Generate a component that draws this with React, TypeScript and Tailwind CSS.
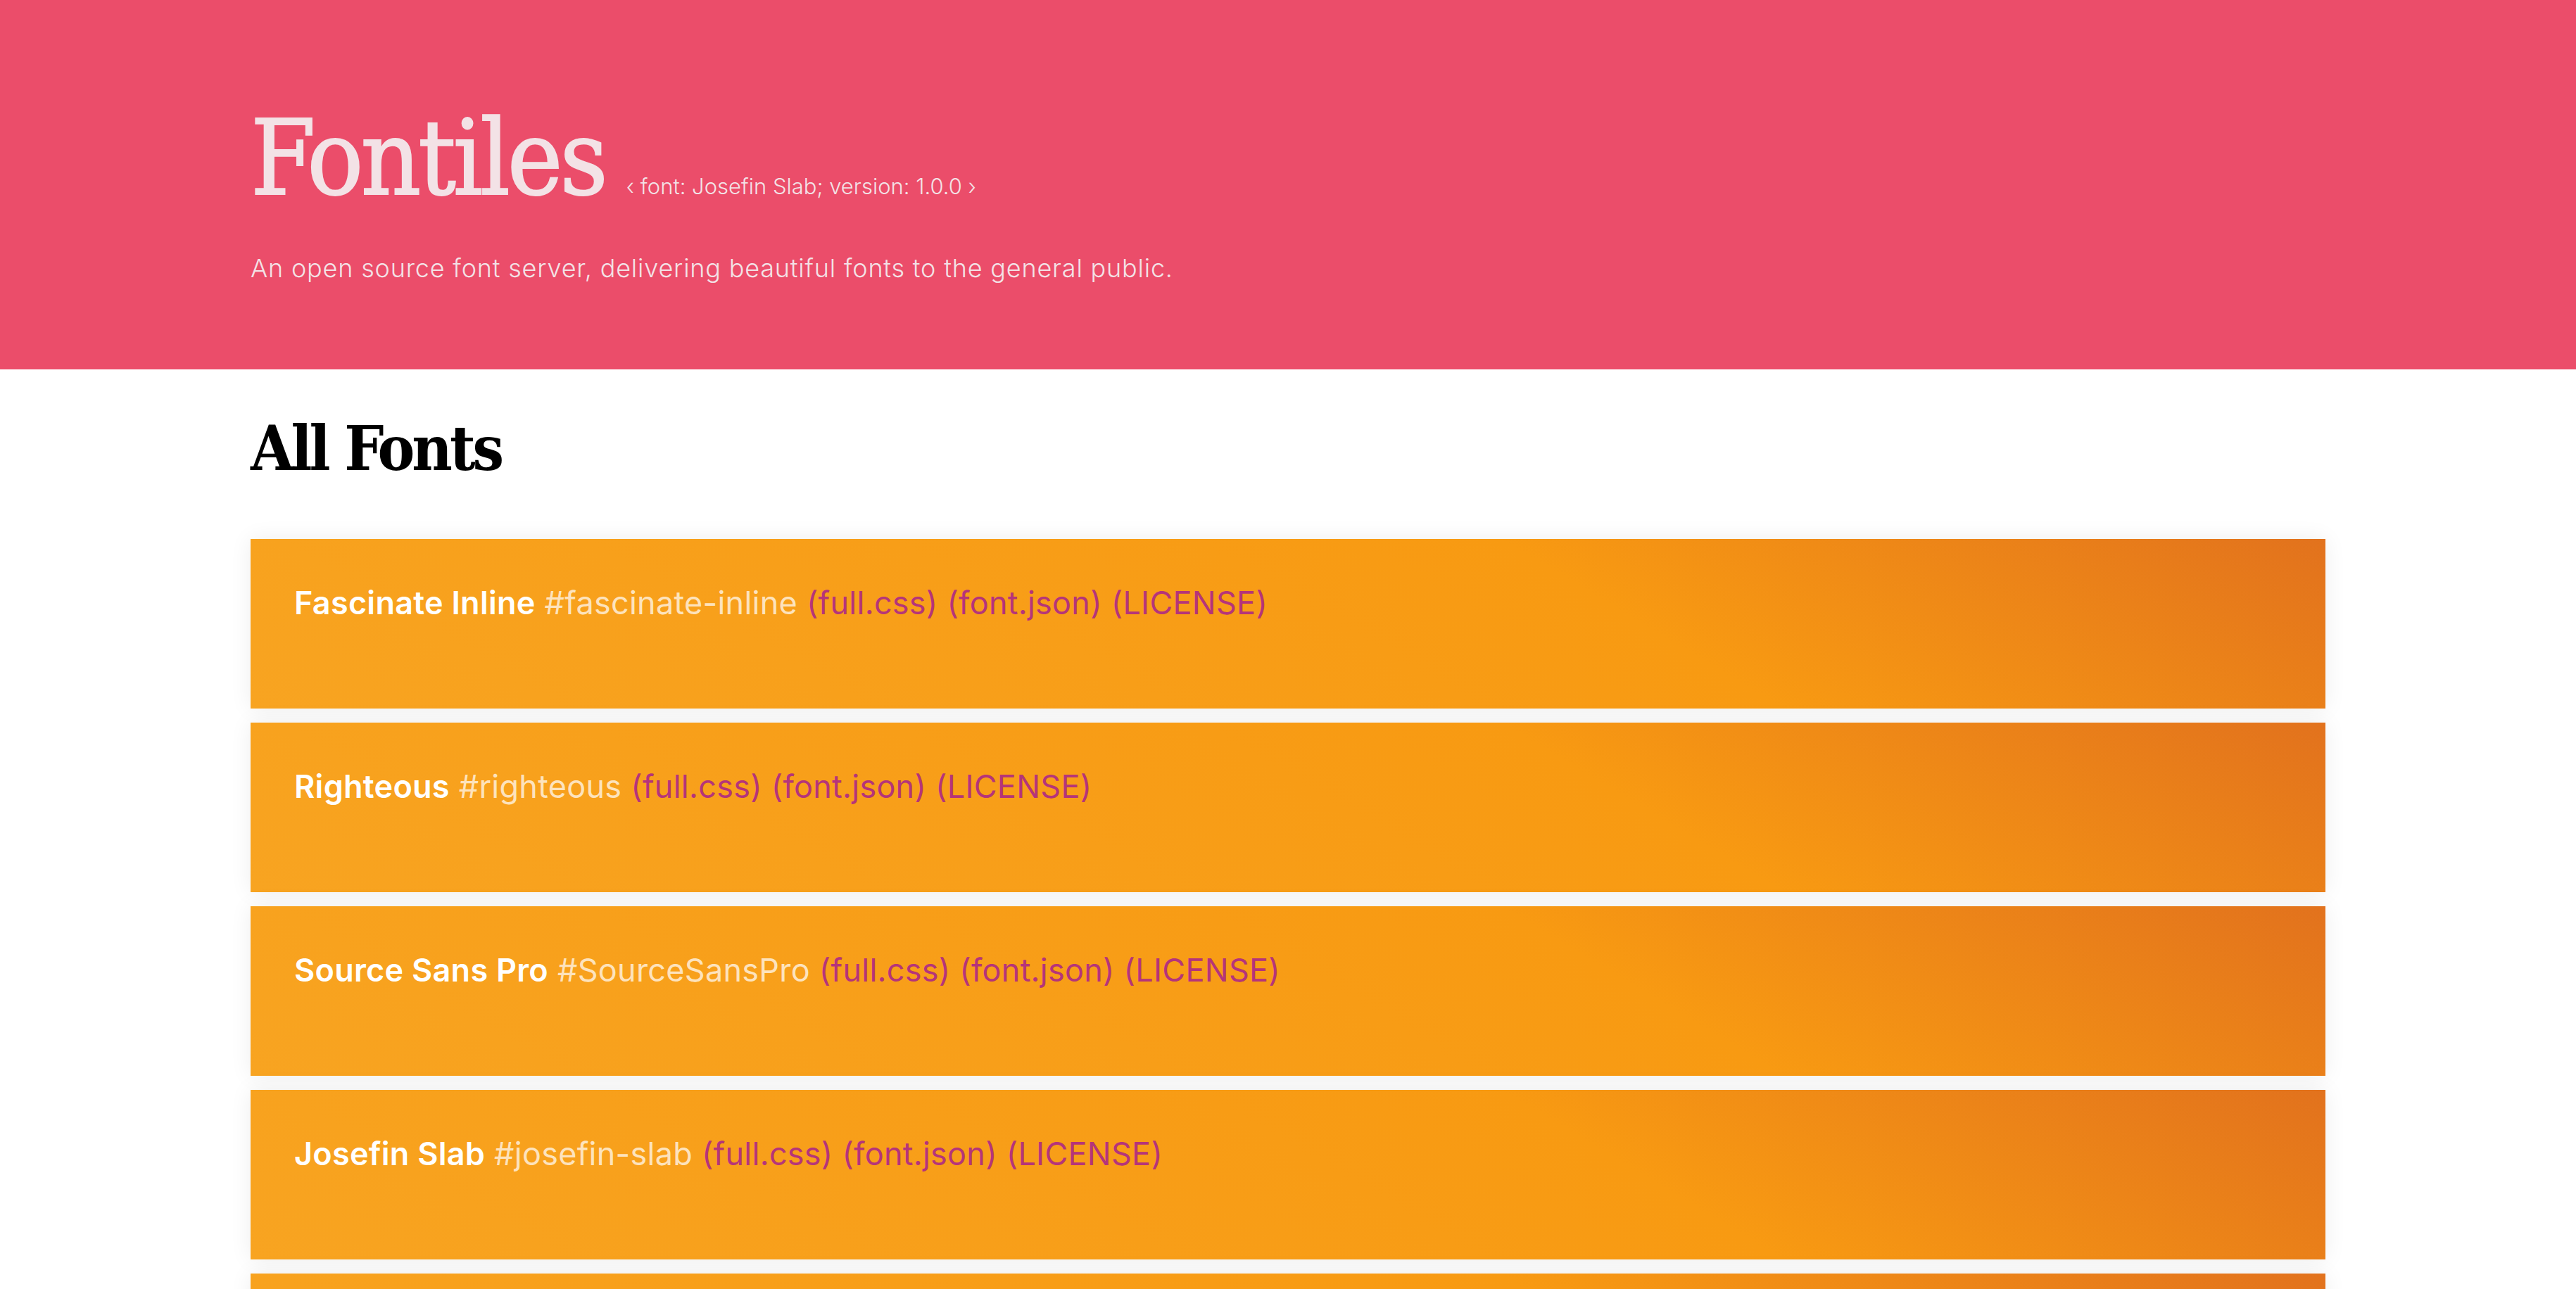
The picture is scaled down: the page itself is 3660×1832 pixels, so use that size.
import React from "react";

type FontEntry = {
  name: string;
  slug: string;
};

const fonts: FontEntry[] = [
  { name: "Fascinate Inline", slug: "fascinate-inline" },
  { name: "Righteous", slug: "righteous" },
  { name: "Source Sans Pro", slug: "SourceSansPro" },
  { name: "Josefin Slab", slug: "josefin-slab" },
  { name: "Manrope", slug: "manrope" },
  { name: "Lobster", slug: "lobster" },
];

const slab = { fontFamily: '"DejaVu Serif Condensed", "DejaVu Serif", serif' };
const sans = { fontFamily: 'Inter, "Noto Sans", sans-serif' };

function FontCard({ font }: { font: FontEntry }) {
  return (
    <li className="h-[241px] px-[62px] pt-[57px] bg-[linear-gradient(31deg,#f8a421_0%,#f89a12_65%,#e2721d_100%)] shadow-[0_0_30px_rgba(0,0,0,0.07)]">
      <p className="text-[45px] leading-[1.5] tracking-[0.25px] text-white" style={sans}>
        <span className="font-semibold">{font.name}</span>{" "}
        <a href={`#${font.slug}`} className="text-[#fde3bd]">
          #{font.slug}
        </a>{" "}
        <a href={`/${font.slug}/full.css`} className="text-[#b5347a]">
          (full.css)
        </a>{" "}
        <a href={`/${font.slug}/font.json`} className="text-[#b5347a]">
          (font.json)
        </a>{" "}
        <a href={`/${font.slug}/LICENSE`} className="text-[#b5347a]">
          (LICENSE)
        </a>
      </p>
    </li>
  );
}

export default function App() {
  return (
    <div className="min-h-screen bg-white">
      <header className="h-[525px] bg-[#eb4d6a] text-[#f3e2e6]">
        <div className="mx-auto w-[2948px] pt-[151px]">
          <h1 className="flex items-baseline">
            <span
              className="text-[148px] leading-none tracking-[-4px] [-webkit-text-stroke:2px_currentColor]"
              style={slab}
            >
              Fontiles
            </span>
            <small className="ml-[30px] text-[31px] font-light leading-none" style={sans}>
              ‹ font: Josefin Slab; version: 1.0.0 ›
            </small>
          </h1>
          <p
            className="mt-[55px] text-[36px] font-light leading-[1.5] tracking-[0.8px]"
            style={sans}
          >
            An open source font server, delivering beautiful fonts to the general public.
          </p>
        </div>
      </header>

      <main className="mx-auto w-[2948px] pb-[80px]">
        <h2
          className="mt-[68px] text-[88px] font-bold leading-none tracking-[-4px] text-black"
          style={slab}
        >
          All Fonts
        </h2>
        <ul className="mt-[85px] flex flex-col gap-[20px]">
          {fonts.map((f) => (
            <FontCard key={f.slug} font={f} />
          ))}
        </ul>
      </main>
    </div>
  );
}
